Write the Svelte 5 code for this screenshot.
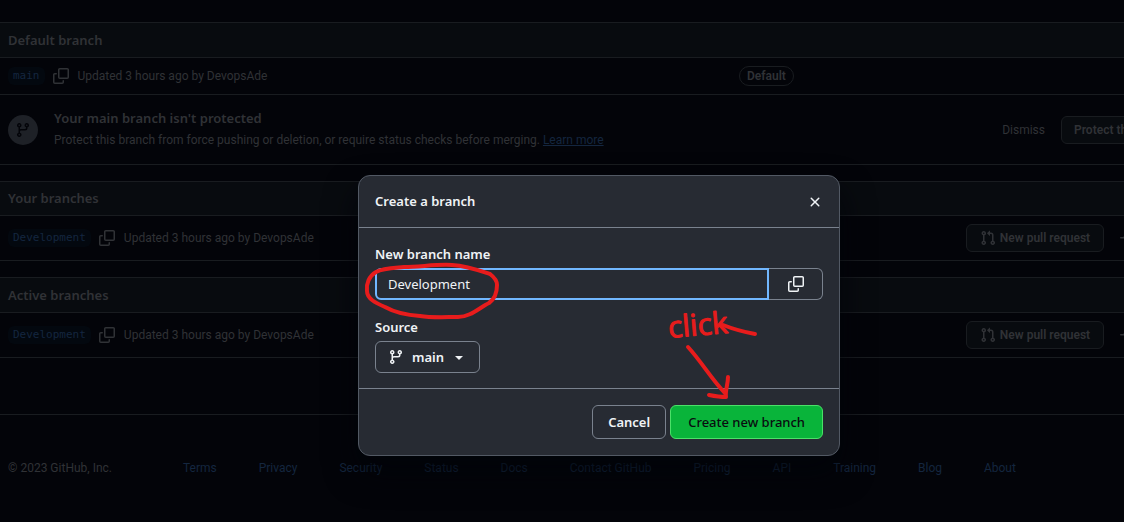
<script>
  let branchName = $state('Development');
  let source = $state('main');

  const sections = [
    { title: 'Your branches', branch: 'Development' },
    { title: 'Active branches', branch: 'Development' }
  ];

  const footerLinks = [
    'Terms', 'Privacy', 'Security', 'Status', 'Docs', 'Contact GitHub',
    'Pricing', 'API', 'Training', 'Blog', 'About'
  ];
</script>

{#snippet copyIcon()}
  <svg class="icon" viewBox="0 0 16 16" aria-hidden="true">
    <path d="M0 6.75C0 5.784.784 5 1.75 5h1.5a.75.75 0 0 1 0 1.5h-1.5a.25.25 0 0 0-.25.25v7.5c0 .138.112.25.25.25h7.5a.25.25 0 0 0 .25-.25v-1.5a.75.75 0 0 1 1.5 0v1.5A1.75 1.75 0 0 1 9.25 16h-7.5A1.75 1.75 0 0 1 0 14.25Z" />
    <path d="M5 1.75C5 .784 5.784 0 6.75 0h7.5C15.216 0 16 .784 16 1.75v7.5A1.75 1.75 0 0 1 14.25 11h-7.5A1.75 1.75 0 0 1 5 9.25Zm1.75-.25a.25.25 0 0 0-.25.25v7.5c0 .138.112.25.25.25h7.5a.25.25 0 0 0 .25-.25v-7.5a.25.25 0 0 0-.25-.25Z" />
  </svg>
{/snippet}

{#snippet branchIcon()}
  <svg class="icon" viewBox="0 0 16 16" aria-hidden="true">
    <path d="M9.5 3.25a2.25 2.25 0 1 1 3 2.122V6A2.5 2.5 0 0 1 10 8.5H6a1 1 0 0 0-1 1v1.128a2.251 2.251 0 1 1-1.5 0V5.372a2.25 2.25 0 1 1 1.5 0v1.836A2.493 2.493 0 0 1 6 7h4a1 1 0 0 0 1-1v-.628A2.25 2.25 0 0 1 9.5 3.25Zm-6 0a.75.75 0 1 0 1.5 0 .75.75 0 0 0-1.5 0Zm8.25-.75a.75.75 0 1 0 0 1.5.75.75 0 0 0 0-1.5ZM4.25 12a.75.75 0 1 0 0 1.5.75.75 0 0 0 0-1.5Z" />
  </svg>
{/snippet}

<div class="viewport">
  <div class="page">
    <main>
      <section class="box">
        <h2 class="tall">Default branch</h2>
        <div class="row default">
          <div class="info">
            <a class="branch" href="#main">main</a>
            <button class="plain" aria-label="Copy branch name">{@render copyIcon()}</button>
            <span class="updated">Updated 3 hours ago by DevopsAde</span>
          </div>
          <span class="pill">Default</span>
        </div>
        <div class="notice">
          <span class="disc">{@render branchIcon()}</span>
          <div class="notice-text">
            <strong>Your main branch isn't protected</strong>
            <p>Protect this branch from force pushing or deletion, or require status checks before merging. <a href="#learn">Learn more</a></p>
          </div>
          <button class="plain dismiss">Dismiss</button>
          <button class="small protect">Protect this branch</button>
        </div>
      </section>

      {#each sections as section, i}
        <section class="box">
          <h2 class:tall={i === 1}>{section.title}</h2>
          <div class="row">
            <div class="info">
              <a class="branch" href="#dev">{section.branch}</a>
              <button class="plain" aria-label="Copy branch name">{@render copyIcon()}</button>
              <span class="updated">Updated 3 hours ago by DevopsAde</span>
            </div>
            <button class="small pull">
              <svg class="icon" viewBox="0 0 16 16" aria-hidden="true">
                <path d="M1.5 3.25a2.25 2.25 0 1 1 3 2.122v5.256a2.251 2.251 0 1 1-1.5 0V5.372A2.25 2.25 0 0 1 1.5 3.25Zm5.677-.177L9.573.677A.25.25 0 0 1 10 .854V2.5h1A2.5 2.5 0 0 1 13.5 5v5.628a2.251 2.251 0 1 1-1.5 0V5a1 1 0 0 0-1-1h-1v1.646a.25.25 0 0 1-.427.177L7.177 3.427a.25.25 0 0 1 0-.354ZM3.75 2.5a.75.75 0 1 0 0 1.5.75.75 0 0 0 0-1.5Zm0 9.5a.75.75 0 1 0 0 1.5.75.75 0 0 0 0-1.5Zm8.25.75a.75.75 0 1 0 1.5 0 .75.75 0 0 0-1.5 0Z" />
              </svg>
              <span>New pull request</span>
            </button>
            <button class="plain activity" aria-label="Activity">
              <svg class="icon" viewBox="0 0 16 16" aria-hidden="true">
                <path d="M6 2c.306 0 .582.187.696.471L10 10.731l1.304-3.26A.751.751 0 0 1 12 7h3.25a.75.75 0 0 1 0 1.5h-2.742l-1.812 4.528a.751.751 0 0 1-1.392 0L6 4.77 4.696 8.03A.75.75 0 0 1 4 8.5H.75a.75.75 0 0 1 0-1.5h2.742l1.812-4.529A.751.751 0 0 1 6 2Z" />
              </svg>
            </button>
          </div>
        </section>
      {/each}
    </main>

    <footer>
      <span class="copyright">© 2023 GitHub, Inc.</span>
      <nav>
        {#each footerLinks as link}
          <a href="#footer">{link}</a>
        {/each}
      </nav>
    </footer>

    <div class="overlay">
      <div class="dialog" role="dialog" aria-labelledby="dialog-title">
        <header>
          <h1 id="dialog-title">Create a branch</h1>
          <button class="plain close" aria-label="Close">
            <svg class="icon" viewBox="0 0 16 16" aria-hidden="true">
              <path d="M3.72 3.72a.75.75 0 0 1 1.06 0L8 6.94l3.22-3.22a.75.75 0 1 1 1.06 1.06L9.06 8l3.22 3.22a.75.75 0 1 1-1.06 1.06L8 9.06l-3.22 3.22a.75.75 0 0 1-1.06-1.06L6.94 8 3.72 4.78a.75.75 0 0 1 0-1.06Z" />
            </svg>
          </button>
        </header>
        <div class="body">
          <label for="branch-name">New branch name</label>
          <div class="field">
            <input id="branch-name" type="text" bind:value={branchName} />
            <button class="copy" aria-label="Copy">{@render copyIcon()}</button>
          </div>
          <label for="branch-source">Source</label>
          <div class="source">
            {@render branchIcon()}
            <select id="branch-source" bind:value={source}>
              <option value="main">main</option>
            </select>
            <span class="caret"></span>
          </div>
        </div>
        <div class="actions">
          <button class="cancel">Cancel</button>
          <button class="create">Create new branch</button>
        </div>

        <svg class="marks" viewBox="0 0 480 280" aria-hidden="true">
          <path d="M131 98 C119 94 108 90 93 89 C77 88 61 91 45 91 C33 92 24 92 17 96 C10 100 7 108 8 115 C8 123 17 127 26 131 C35 136 46 139 61 140 C73 142 87 141 99 141 C111 141 120 132 130 127 C137 122 138 114 138 109 C138 104 135 101 131 98" />
          <text x="310" y="162" transform="rotate(-5 310 162)">click</text>
          <path d="M364 149 C374 153 385 156 396 158" />
          <path d="M329 171 C342 185 353 204 366 217 M369 201 C369 208 366 215 367 221 C361 221 355 220 350 219" />
        </svg>
      </div>
    </div>
  </div>
</div>

<style>
  :global(body) {
    background: #030409;
  }

  .viewport {
    overflow: hidden;
    font: 12px/18px Roboto, "Open Sans", sans-serif;
    color: #303236;
  }

  /* The layout runs wider than the window and is clipped at its right edge. */
  .page {
    position: relative;
    width: calc(100% + 74px);
    min-height: 100vh;
    box-sizing: border-box;
    padding-top: 22px;
    background: #030409;
  }

  button, input, select {
    box-sizing: border-box;
    margin: 0;
    font: inherit;
    color: inherit;
  }

  a {
    color: #14263f;
    text-decoration: none;
  }

  h1, h2, p {
    margin: 0;
  }

  .icon {
    display: block;
    flex: none;
    width: 16px;
    height: 16px;
    fill: currentColor;
  }

  .plain {
    padding: 0;
    border: 0;
    background: none;
  }

  main {
    display: grid;
    gap: 16px;
  }

  .box {
    border: solid #191c20;
    border-width: 1px 0;
  }

  h2 {
    padding: 0 8px;
    background: #080b0f;
    border-bottom: 1px solid #191c20;
    font-family: "Noto Sans", sans-serif;
    font-size: 13px;
    font-weight: 600;
    line-height: 33px;
  }

  h2.tall {
    line-height: 34px;
  }

  .row {
    display: flex;
    align-items: center;
    height: 44px;
    padding-left: 8px;
  }

  .row.default {
    height: 36px;
    border-bottom: 1px solid #191c20;
  }

  .info {
    display: flex;
    align-items: center;
    gap: 8px;
    width: 731px;
  }

  .branch {
    padding: 0 5px;
    border-radius: 6px;
    background: #03080f;
    font: 11px/18px "DejaVu Sans Mono", monospace;
  }

  .updated {
    padding: 0 0 1px 1px;
  }

  .pill {
    padding: 0 7px;
    border: 1px solid #191c20;
    border-radius: 20px;
    font-weight: 600;
  }

  .notice {
    display: flex;
    align-items: center;
    height: 69px;
    padding-left: 8px;
  }

  .disc {
    display: grid;
    place-items: center;
    width: 30px;
    height: 30px;
    margin-right: 16px;
    border-radius: 50%;
    background: #1e2127;
    color: #030409;
  }

  .notice-text {
    flex: 1;
    line-height: 21px;
    white-space: nowrap;
  }

  .notice-text strong {
    font-family: "Noto Sans", sans-serif;
    font-size: 13px;
    font-weight: 600;
  }

  .notice-text a {
    text-decoration: underline;
  }

  .dismiss {
    margin-right: 16px;
  }

  .small {
    height: 28px;
    border: 1px solid #191c20;
    border-radius: 6px;
    background: #080b0f;
    font-weight: 600;
    white-space: nowrap;
  }

  .protect {
    flex: none;
    width: 137px;
    padding: 0 12px;
    text-align: left;
  }

  .pull {
    display: flex;
    align-items: center;
    justify-content: center;
    gap: 4px;
    width: 138px;
    margin-left: auto;
    padding: 0;
  }

  .activity {
    margin: 0 62px 0 16px;
  }

  footer {
    display: flex;
    margin-top: 56px;
    padding: 44px 182px 44px 8px;
    border-top: 1px solid #191c20;
  }

  .copyright {
    width: 175px;
  }

  nav {
    display: flex;
    flex: 1;
    justify-content: space-between;
    white-space: nowrap;
  }

  .overlay {
    position: absolute;
    inset: 0;
    display: flex;
    align-items: flex-start;
    justify-content: center;
    padding-top: 175px;
  }

  .dialog {
    position: relative;
    width: 480px;
    border: 1px solid #525964;
    border-radius: 12px;
    background: #272b33;
    box-shadow: 0 16px 32px rgba(1, 4, 9, 0.85);
    color: #f0f3f6;
    font-family: "Noto Sans", sans-serif;
    font-size: 13px;
    line-height: 20px;
  }

  header {
    display: flex;
    align-items: center;
    justify-content: space-between;
    padding: 15px 16px;
    border-bottom: 1px solid #7a828e;
  }

  h1 {
    font-size: 13px;
    font-weight: 600;
    line-height: 21px;
  }

  .body {
    display: flex;
    flex-direction: column;
    padding: 16px 16px 15px;
    border-bottom: 1px solid #7a828e;
  }

  label {
    margin-bottom: 4px;
    font-weight: 600;
  }

  .field {
    display: flex;
    margin-bottom: 17px;
  }

  input {
    flex: 1;
    min-width: 0;
    height: 32px;
    padding: 0 11px;
    border: 2px solid #71b7ff;
    border-radius: 6px 0 0 6px;
    background: #272b33;
    outline: none;
  }

  .copy {
    display: grid;
    place-items: center;
    width: 54px;
    height: 32px;
    padding: 0;
    border: 1px solid #7a828e;
    border-left: 0;
    border-radius: 0 6px 6px 0;
    background: #272b33;
  }

  .source {
    position: relative;
    width: 105px;
  }

  .source .icon {
    position: absolute;
    left: 13px;
    top: 8px;
  }

  select {
    display: block;
    width: 100%;
    height: 32px;
    padding: 0 24px 0 36px;
    appearance: none;
    border: 1px solid #7a828e;
    border-radius: 6px;
    background: none;
    font-weight: 600;
  }

  .caret {
    position: absolute;
    right: 17px;
    top: 15px;
    border: 4px solid transparent;
    border-top-color: #f0f3f6;
    border-bottom: 0;
    pointer-events: none;
  }

  .actions {
    display: flex;
    justify-content: flex-end;
    gap: 4px;
    padding: 16px;
  }

  .actions button {
    height: 34px;
    padding: 0 15px;
    border: 1px solid #7a828e;
    border-radius: 6px;
    background: #272b33;
    font-weight: 600;
  }

  .actions .create {
    padding: 0 17px;
    border-color: #4ae168;
    background: #09b43a;
    color: #0a0c10;
    font-weight: 500;
  }

  .marks {
    position: absolute;
    inset: 0;
    width: 480px;
    height: 280px;
    overflow: visible;
    fill: none;
    stroke: #e81c1c;
    stroke-width: 4;
    stroke-linecap: round;
    stroke-linejoin: round;
    pointer-events: none;
  }

  .marks text {
    fill: #e81c1c;
    stroke-width: 1;
    font: 400 30px/1 "Open Sans", sans-serif;
  }
</style>
